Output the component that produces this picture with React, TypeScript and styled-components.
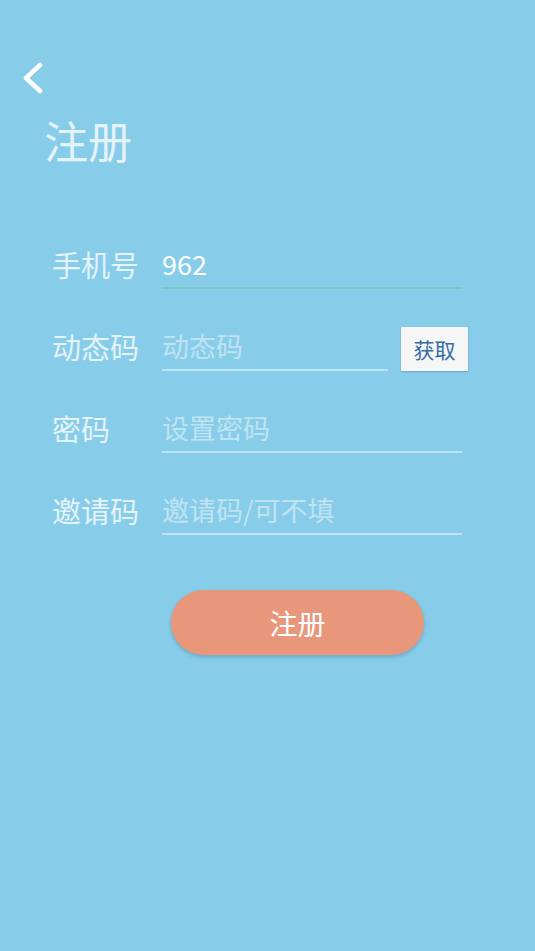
import React from "react";
import styled, { createGlobalStyle } from "styled-components";

const GlobalStyle = createGlobalStyle`
  html, body { margin: 0; padding: 0; background: #87cdea; }
  body { font-family: "Noto Sans CJK SC", "Noto Sans", sans-serif; }
  * { box-sizing: border-box; }
`;

const Page = styled.div`
  width: 535px;
  min-height: 951px;
  background: #87cdea;
  padding-top: 62px;
  display: flex;
  flex-direction: column;
`;

const BackButton = styled.button`
  margin-left: 21px;
  width: 24px;
  height: 32px;
  padding: 0;
  border: none;
  background: transparent;
  display: flex;
  align-items: center;
  justify-content: center;
  cursor: pointer;
`;

const Title = styled.h1`
  margin: 24px 0 0 44px;
  font-size: 44px;
  line-height: 44px;
  font-weight: 400;
  color: #e4f3f9;
`;

const Form = styled.div`
  margin-top: 82px;
  margin-left: 52px;
  display: flex;
  flex-direction: column;
  gap: 37px;
`;

const Row = styled.div`
  display: flex;
  align-items: center;
`;

const Label = styled.label`
  width: 110px;
  height: 45px;
  padding-bottom: 4px;
  font-size: 29px;
  line-height: 41px;
  color: #e4f3f9;
`;

const Field = styled.input<{ $width: number; $focused?: boolean }>`
  width: ${(p) => p.$width}px;
  height: 45px;
  padding: 0 0 4px 0;
  border: none;
  border-bottom: 2px solid ${(p) => (p.$focused ? "#76c8c0" : "#bfe4f4")};
  background: transparent;
  outline: none;
  font-family: "Noto Sans CJK SC", "Noto Sans", sans-serif;
  font-size: 27px;
  color: #ffffff;
  &::placeholder {
    color: #bfe3f1;
  }
`;

const GetButton = styled.button`
  margin-left: 13px;
  width: 67px;
  height: 44px;
  border: none;
  border-radius: 1px;
  background: #f5f6f6;
  box-shadow: 0 1px 2px rgba(0, 0, 0, 0.2);
  color: #356ca6;
  font-family: "Noto Sans CJK SC", "Noto Sans", sans-serif;
  font-size: 21px;
  padding: 0;
`;

const SubmitButton = styled.button`
  margin: 55px 0 0 171px;
  width: 253px;
  height: 65px;
  border: none;
  border-radius: 33px;
  background: #e9977b;
  box-shadow: 0 2px 4px rgba(0, 0, 0, 0.18);
  color: #ffffff;
  font-family: "Noto Sans CJK SC", "Noto Sans", sans-serif;
  font-size: 28px;
  padding: 0;
`;

export default function App() {
  return (
    <>
      <GlobalStyle />
      <Page>
        <BackButton aria-label="返回">
          <svg width="24" height="32" viewBox="0 0 24 32">
            <polyline
              points="19,3 5,16 19,29"
              fill="none"
              stroke="#ffffff"
              strokeWidth="4.5"
              strokeLinecap="round"
              strokeLinejoin="round"
            />
          </svg>
        </BackButton>
        <Title>注册</Title>
        <Form>
          <Row>
            <Label>手机号</Label>
            <Field $width={300} $focused defaultValue="962" />
          </Row>
          <Row>
            <Label>动态码</Label>
            <Field $width={226} placeholder="动态码" />
            <GetButton>获取</GetButton>
          </Row>
          <Row>
            <Label>密码</Label>
            <Field $width={300} type="text" placeholder="设置密码" />
          </Row>
          <Row>
            <Label>邀请码</Label>
            <Field $width={300} placeholder="邀请码/可不填" />
          </Row>
        </Form>
        <SubmitButton>注册</SubmitButton>
      </Page>
    </>
  );
}
